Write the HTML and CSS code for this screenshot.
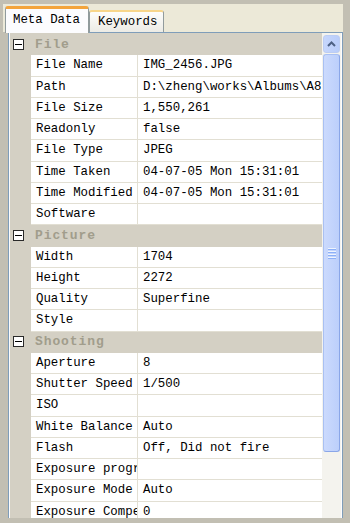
FILE: index.html
```html
<!DOCTYPE html>
<html lang="en">
<head>
    <meta charset="UTF-8">
    <title>Meta Data</title>
    <link rel="stylesheet" href="styles.css">
</head>
<body>
    <div class="tabstrip">
        <div class="tab active">Meta Data</div>
        <div class="tab">Keywords</div>
    </div>

    <div class="panel">
        <div class="grid">
            <div class="cat"><span class="toggle"></span>File</div>
            <div class="row"><div class="name">File Name</div><div class="value">IMG_2456.JPG</div></div>
            <div class="row"><div class="name">Path</div><div class="value">D:\zheng\works\Albums\A8\2004</div></div>
            <div class="row"><div class="name">File Size</div><div class="value">1,550,261</div></div>
            <div class="row"><div class="name">Readonly</div><div class="value">false</div></div>
            <div class="row"><div class="name">File Type</div><div class="value">JPEG</div></div>
            <div class="row"><div class="name">Time Taken</div><div class="value">04-07-05 Mon 15:31:01</div></div>
            <div class="row"><div class="name">Time Modified</div><div class="value">04-07-05 Mon 15:31:01</div></div>
            <div class="row"><div class="name">Software</div><div class="value"></div></div>

            <div class="cat"><span class="toggle"></span>Picture</div>
            <div class="row"><div class="name">Width</div><div class="value">1704</div></div>
            <div class="row"><div class="name">Height</div><div class="value">2272</div></div>
            <div class="row"><div class="name">Quality</div><div class="value">Superfine</div></div>
            <div class="row"><div class="name">Style</div><div class="value"></div></div>

            <div class="cat"><span class="toggle"></span>Shooting</div>
            <div class="row"><div class="name">Aperture</div><div class="value">8</div></div>
            <div class="row"><div class="name">Shutter Speed</div><div class="value">1/500</div></div>
            <div class="row"><div class="name">ISO</div><div class="value"></div></div>
            <div class="row"><div class="name">White Balance</div><div class="value">Auto</div></div>
            <div class="row"><div class="name">Flash</div><div class="value">Off, Did not fire</div></div>
            <div class="row"><div class="name">Exposure program</div><div class="value"></div></div>
            <div class="row"><div class="name">Exposure Mode</div><div class="value">Auto</div></div>
            <div class="row"><div class="name">Exposure Compensation</div><div class="value">0</div></div>
        </div>

        <div class="scrollbar">
            <div class="sb-btn">
                <svg width="9" height="6" viewBox="0 0 9 6"><path d="M1 5 L4.5 1.5 L8 5" fill="none" stroke="#4d6185" stroke-width="2"/></svg>
            </div>
            <div class="sb-thumb">
                <div class="grip"><i></i><i></i><i></i><i></i></div>
            </div>
        </div>
    </div>
</body>
</html>
```

FILE: styles.css
```css
* {
    margin: 0;
    padding: 0;
    box-sizing: border-box;
}

body {
    width: 350px;
    height: 523px;
    overflow: hidden;
    background: #c2bfb3;
    padding: 4px 7px 5px 3px;
    font-family: "Liberation Mono", "DejaVu Sans Mono", monospace;
    font-size: 12.4px;
    color: #000;
}

/* tabs */
.tabstrip {
    height: 28px;
    background: #ece9d8;
    display: flex;
    align-items: flex-end;
    padding-left: 2px;
}

.tab {
    height: 22px;
    padding: 0 5px 0 8px;
    line-height: 20px;
    background: linear-gradient(#fdfdfb, #ecebe5);
    border: 1px solid #919b9c;
    border-bottom: none;
    border-top: 2px solid #f8d68a;
    border-radius: 3px 3px 0 0;
    white-space: nowrap;
}

.tab.active {
    height: 27px;
    width: 84px;
    margin-bottom: -1px;
    padding-left: 7px;
    line-height: 23px;
    background: #fcfcfe;
    border-top: 3px solid #f3a43c;
    position: relative;
    z-index: 1;
}

/* panel */
.panel {
    margin-left: 5px;
    height: 486px;
    border: 1px solid #7f9db9;
    border-bottom: none;
    background: #fcfcfe;
    padding: 0 1px 0 1px;
    display: flex;
}

.grid {
    flex: 1;
    overflow: hidden;
    background: #d4d0c4;
    padding-top: 1px;
}

.cat {
    height: 21.25px;
    display: flex;
    align-items: center;
    padding-left: 3px;
    font-weight: bold;
    font-size: 13px;
    letter-spacing: 0.9px;
    color: #a19d8c;
    border-bottom: 1px solid #d4d0c4;
}

.toggle {
    width: 11px;
    height: 11px;
    border: 1px solid #2a2a2a;
    background: #fff;
    margin-right: 11px;
    position: relative;
}

.toggle::after {
    content: "";
    position: absolute;
    left: 1px;
    right: 1px;
    top: 4px;
    height: 1px;
    background: #000;
}

.row {
    height: 21.25px;
    display: flex;
    margin-left: 21px;
    background: #fff;
    border-bottom: 1.5px solid #e2dfd3;
}

.name,
.value {
    white-space: nowrap;
    overflow: hidden;
    line-height: 20px;
}

.name {
    width: 107px;
    padding-left: 5px;
    border-right: 1.5px solid #e2dfd3;
}

.value {
    flex: 1;
    padding-left: 5px;
}

/* scrollbar */
.scrollbar {
    width: 19px;
    background: #f4f3ee;
    padding: 2px 1px 0 1px;
}

.sb-btn {
    height: 18px;
    border: 1px solid #bccdf3;
    border-radius: 3px;
    background: linear-gradient(90deg, #c6d6fc, #b9cdfa);
    display: flex;
    align-items: center;
    justify-content: center;
}

.sb-thumb {
    height: 398px;
    margin-top: 1px;
    border: 1px solid #a9c0f2;
    border-right-color: #8aa6e8;
    border-bottom-color: #8aa6e8;
    border-radius: 3px;
    background: linear-gradient(90deg, #cbdafd, #bccffb);
    display: flex;
    align-items: center;
    justify-content: center;
}

.grip {
    width: 8px;
    display: flex;
    flex-direction: column;
    gap: 1px;
}

.grip i {
    display: block;
    height: 1px;
    background: #eef4fe;
    border-bottom: 1px solid #8cb0f8;
    box-sizing: content-box;
}
```
